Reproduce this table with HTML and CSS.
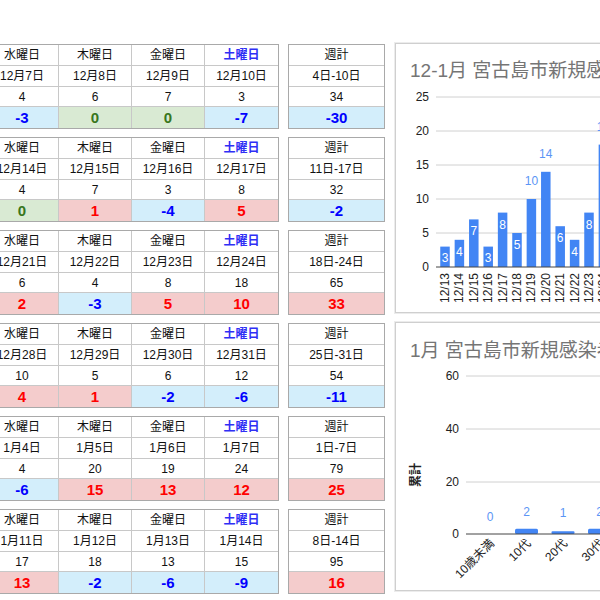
FILE: index.html
```html
<!DOCTYPE html>
<html lang="ja">
<head>
<meta charset="utf-8">
<title>宮古島市 新規感染者</title>
<link rel="stylesheet" href="styles.css">
</head>
<body>
<div class="page">
  <div class="weeks">
    <div class="week">
      <table class="days">
        <tr class="hd"><td>水曜日</td><td>木曜日</td><td>金曜日</td><td class="sat">土曜日</td></tr>
        <tr class="dt"><td>12月7日</td><td>12月8日</td><td>12月9日</td><td>12月10日</td></tr>
        <tr class="ct"><td>4</td><td>6</td><td>7</td><td>3</td></tr>
        <tr class="diff"><td class="dn">-3</td><td class="eq">0</td><td class="eq">0</td><td class="dn">-7</td></tr>
      </table>
      <table class="total">
        <tr class="hd"><td>週計</td></tr>
        <tr class="dt"><td>4日-10日</td></tr>
        <tr class="ct"><td>34</td></tr>
        <tr class="diff"><td class="dn">-30</td></tr>
      </table>
    </div>
    <div class="week">
      <table class="days">
        <tr class="hd"><td>水曜日</td><td>木曜日</td><td>金曜日</td><td class="sat">土曜日</td></tr>
        <tr class="dt"><td>12月14日</td><td>12月15日</td><td>12月16日</td><td>12月17日</td></tr>
        <tr class="ct"><td>4</td><td>7</td><td>3</td><td>8</td></tr>
        <tr class="diff"><td class="eq">0</td><td class="up">1</td><td class="dn">-4</td><td class="up">5</td></tr>
      </table>
      <table class="total">
        <tr class="hd"><td>週計</td></tr>
        <tr class="dt"><td>11日-17日</td></tr>
        <tr class="ct"><td>32</td></tr>
        <tr class="diff"><td class="dn">-2</td></tr>
      </table>
    </div>
    <div class="week">
      <table class="days">
        <tr class="hd"><td>水曜日</td><td>木曜日</td><td>金曜日</td><td class="sat">土曜日</td></tr>
        <tr class="dt"><td>12月21日</td><td>12月22日</td><td>12月23日</td><td>12月24日</td></tr>
        <tr class="ct"><td>6</td><td>4</td><td>8</td><td>18</td></tr>
        <tr class="diff"><td class="up">2</td><td class="dn">-3</td><td class="up">5</td><td class="up">10</td></tr>
      </table>
      <table class="total">
        <tr class="hd"><td>週計</td></tr>
        <tr class="dt"><td>18日-24日</td></tr>
        <tr class="ct"><td>65</td></tr>
        <tr class="diff"><td class="up">33</td></tr>
      </table>
    </div>
    <div class="week">
      <table class="days">
        <tr class="hd"><td>水曜日</td><td>木曜日</td><td>金曜日</td><td class="sat">土曜日</td></tr>
        <tr class="dt"><td>12月28日</td><td>12月29日</td><td>12月30日</td><td>12月31日</td></tr>
        <tr class="ct"><td>10</td><td>5</td><td>6</td><td>12</td></tr>
        <tr class="diff"><td class="up">4</td><td class="up">1</td><td class="dn">-2</td><td class="dn">-6</td></tr>
      </table>
      <table class="total">
        <tr class="hd"><td>週計</td></tr>
        <tr class="dt"><td>25日-31日</td></tr>
        <tr class="ct"><td>54</td></tr>
        <tr class="diff"><td class="dn">-11</td></tr>
      </table>
    </div>
    <div class="week">
      <table class="days">
        <tr class="hd"><td>水曜日</td><td>木曜日</td><td>金曜日</td><td class="sat">土曜日</td></tr>
        <tr class="dt"><td>1月4日</td><td>1月5日</td><td>1月6日</td><td>1月7日</td></tr>
        <tr class="ct"><td>4</td><td>20</td><td>19</td><td>24</td></tr>
        <tr class="diff"><td class="dn">-6</td><td class="up">15</td><td class="up">13</td><td class="up">12</td></tr>
      </table>
      <table class="total">
        <tr class="hd"><td>週計</td></tr>
        <tr class="dt"><td>1日-7日</td></tr>
        <tr class="ct"><td>79</td></tr>
        <tr class="diff"><td class="up">25</td></tr>
      </table>
    </div>
    <div class="week">
      <table class="days">
        <tr class="hd"><td>水曜日</td><td>木曜日</td><td>金曜日</td><td class="sat">土曜日</td></tr>
        <tr class="dt"><td>1月11日</td><td>1月12日</td><td>1月13日</td><td>1月14日</td></tr>
        <tr class="ct"><td>17</td><td>18</td><td>13</td><td>15</td></tr>
        <tr class="diff"><td class="up">13</td><td class="dn">-2</td><td class="dn">-6</td><td class="dn">-9</td></tr>
      </table>
      <table class="total">
        <tr class="hd"><td>週計</td></tr>
        <tr class="dt"><td>8日-14日</td></tr>
        <tr class="ct"><td>95</td></tr>
        <tr class="diff"><td class="up">16</td></tr>
      </table>
    </div>
  </div>

  <div class="charts">
    <div class="panel p1">
      <svg class="chart" width="600" height="268" viewBox="0 0 600 268">
        <text class="title" x="14" y="33">12-1月 宮古島市新規感染者数</text>
        <g class="grid">
          <line x1="40" x2="600" y1="53" y2="53"/>
          <line x1="40" x2="600" y1="87" y2="87"/>
          <line x1="40" x2="600" y1="121" y2="121"/>
          <line x1="40" x2="600" y1="155" y2="155"/>
          <line x1="40" x2="600" y1="189" y2="189"/>
        </g>
        <g class="ylab">
          <text x="33" y="57">25</text>
          <text x="33" y="91">20</text>
          <text x="33" y="125">15</text>
          <text x="33" y="159">10</text>
          <text x="33" y="193">5</text>
          <text x="33" y="227">0</text>
        </g>
        <g class="bars">
          <rect x="44.25" y="202.6" width="9.5" height="20.4"/>
          <rect x="58.65" y="195.8" width="9.5" height="27.2"/>
          <rect x="73.05" y="175.4" width="9.5" height="47.6"/>
          <rect x="87.45" y="202.6" width="9.5" height="20.4"/>
          <rect x="101.85" y="168.6" width="9.5" height="54.4"/>
          <rect x="116.25" y="189" width="9.5" height="34"/>
          <rect x="130.65" y="155" width="9.5" height="68"/>
          <rect x="145.05" y="127.8" width="9.5" height="95.2"/>
          <rect x="159.45" y="182.2" width="9.5" height="40.8"/>
          <rect x="173.85" y="195.8" width="9.5" height="27.2"/>
          <rect x="188.25" y="168.6" width="9.5" height="54.4"/>
          <rect x="202.65" y="100.6" width="9.5" height="122.4"/>
        </g>
        <line class="axis" x1="40" x2="600" y1="223" y2="223"/>
        <g class="inlab">
          <text x="49" y="217.6">3</text>
          <text x="63.4" y="211.8">4</text>
          <text x="77.8" y="191.4">7</text>
          <text x="92.2" y="217.6">3</text>
          <text x="106.6" y="184.6">8</text>
          <text x="121" y="205">5</text>
          <text x="164.2" y="198.2">6</text>
          <text x="178.6" y="211.8">4</text>
          <text x="193" y="184.6">8</text>
        </g>
        <g class="uplab">
          <text x="135.4" y="141">10</text>
          <text x="149.8" y="113.8">14</text>
          <text x="207.4" y="86.6">18</text>
        </g>
        <g class="xlab">
          <text transform="translate(53,229) rotate(-90)">12/13</text>
          <text transform="translate(67.4,229) rotate(-90)">12/14</text>
          <text transform="translate(81.8,229) rotate(-90)">12/15</text>
          <text transform="translate(96.2,229) rotate(-90)">12/16</text>
          <text transform="translate(110.6,229) rotate(-90)">12/17</text>
          <text transform="translate(125,229) rotate(-90)">12/18</text>
          <text transform="translate(139.4,229) rotate(-90)">12/19</text>
          <text transform="translate(153.8,229) rotate(-90)">12/20</text>
          <text transform="translate(168.2,229) rotate(-90)">12/21</text>
          <text transform="translate(182.6,229) rotate(-90)">12/22</text>
          <text transform="translate(197,229) rotate(-90)">12/23</text>
          <text transform="translate(211.4,229) rotate(-90)">12/24</text>
        </g>
      </svg>
    </div>
    <div class="panel p2">
      <svg class="chart" width="600" height="267" viewBox="0 0 600 267">
        <text class="title" x="14" y="34">1月 宮古島市新規感染者 年代別累計</text>
        <g class="grid">
          <line x1="70" x2="600" y1="53" y2="53"/>
          <line x1="70" x2="600" y1="106" y2="106"/>
          <line x1="70" x2="600" y1="159" y2="159"/>
        </g>
        <g class="ylab">
          <text x="63" y="57">60</text>
          <text x="63" y="110">40</text>
          <text x="63" y="163">20</text>
          <text x="63" y="215">0</text>
        </g>
        <text class="ytitle" transform="translate(24,152) rotate(-90)">累計</text>
        <g class="bars">
          <rect x="119" y="205.7" width="23" height="5.3" rx="1.5"/>
          <rect x="155.5" y="208.35" width="23" height="2.65" rx="1"/>
          <rect x="192" y="205.7" width="23" height="5.3" rx="1.5"/>
        </g>
        <line class="axis" x1="70" x2="600" y1="211" y2="211"/>
        <g class="uplab">
          <text x="94" y="198">0</text>
          <text x="130.5" y="193">2</text>
          <text x="167" y="194">1</text>
          <text x="203.5" y="193">2</text>
        </g>
        <g class="xlab">
          <text transform="translate(99,221) rotate(-45)">10歳未満</text>
          <text transform="translate(135.5,221) rotate(-45)">10代</text>
          <text transform="translate(172,221) rotate(-45)">20代</text>
          <text transform="translate(208.5,221) rotate(-45)">30代</text>
        </g>
      </svg>
    </div>
  </div>
</div>
</body>
</html>
```
FILE: styles.css
```css
html, body {
  margin: 0;
  padding: 0;
  overflow: hidden;
  background: #ffffff;
}

body {
  font-family: "Liberation Sans", "Noto Sans CJK JP", sans-serif;
  color: #111111;
}

.page {
  display: flex;
  align-items: flex-start;
  gap: 10px;
  padding-top: 44px;
  margin-left: -15px;
  width: 1100px;
}

.weeks {
  display: flex;
  flex-direction: column;
  gap: 8px;
}

.week {
  display: flex;
  align-items: flex-start;
  gap: 9px;
}

table {
  border-collapse: separate;
  border-spacing: 0;
  border: 1px solid #a9a9a9;
  table-layout: fixed;
}

.days {
  width: 294px;
}

.total {
  width: 97px;
}

td {
  box-sizing: border-box;
  width: 73px;
  padding: 0;
  text-align: center;
  vertical-align: middle;
  font-size: 12px;
  line-height: 14px;
  color: #111111;
  border-right: 1px solid #c8c8c8;
  border-bottom: 1px solid #c8c8c8;
  white-space: nowrap;
  overflow: hidden;
}

.total td {
  width: 95px;
}

td:last-child {
  border-right: 0;
}

tr:last-child td {
  border-bottom: 0;
}

.hd td {
  height: 21px;
}

.dt td {
  height: 21px;
}

.ct td {
  height: 20px;
}

.diff td {
  height: 21px;
  font-size: 15px;
  font-weight: bold;
}

.hd .sat {
  color: #2f2ff5;
  font-weight: bold;
}

.dn {
  color: #0000ff;
  background: #d3eefb;
}

.up {
  color: #ff0000;
  background: #f4cccc;
}

.eq {
  color: #38761d;
  background: #d9ead3;
}

.charts {
  display: flex;
  flex-direction: column;
  gap: 9px;
  width: 600px;
  margin-top: -1px;
}

.panel {
  border: 1px solid #cfcfcf;
  box-shadow: 0 0 0 1px #ececec;
  background: #ffffff;
  overflow: hidden;
}

.p1 {
  height: 268px;
}

.p2 {
  height: 267px;
}

.chart {
  display: block;
  font-family: "Liberation Sans", "Noto Sans CJK JP", sans-serif;
}

.title {
  font-size: 19px;
  fill: #757575;
}

.grid line {
  stroke: #d0d0d0;
  stroke-width: 1;
}

.axis {
  stroke: #444444;
  stroke-width: 1;
}

.ylab text {
  font-size: 12px;
  fill: #222222;
  text-anchor: end;
}

.bars rect {
  fill: #4285f4;
}

.inlab text {
  font-size: 12px;
  fill: #ffffff;
  text-anchor: middle;
}

.uplab text {
  font-size: 12px;
  fill: #5b95f5;
  text-anchor: middle;
}

.xlab text {
  font-size: 12px;
  fill: #222222;
  text-anchor: end;
}

.ytitle {
  font-size: 12px;
  font-weight: bold;
  fill: #222222;
  text-anchor: middle;
}
```
